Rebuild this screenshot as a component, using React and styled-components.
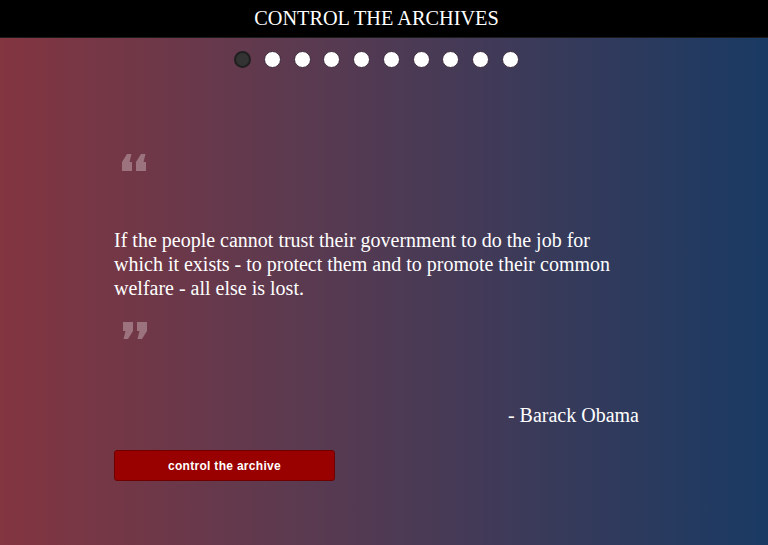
import React from "react";
import styled, { createGlobalStyle } from "styled-components";

const Global = createGlobalStyle`
  html, body { margin: 0; padding: 0; height: 100%; }
  body {
    background: linear-gradient(to right, #833540 0%, #5a3a50 40%, #1a3a63 100%);
    font-family: "Liberation Serif", "Times New Roman", serif;
    color: #fff;
  }
  #root { min-height: 545px; }
`;

const Page = styled.div`
  min-height: 545px;
  display: flex;
  flex-direction: column;
`;

const Header = styled.header`
  height: 37px;
  background: #000;
  border-bottom: 1px solid #1a1a1a;
  display: flex;
  align-items: center;
  justify-content: center;
  padding-right: 15px;
`;

const Title = styled.h1`
  margin: 0;
  font-weight: normal;
  font-size: 20.3px;
  color: #fff;
`;

const Dots = styled.nav`
  display: flex;
  justify-content: center;
  gap: 12.8px;
  margin-top: 13px;
  padding-right: 15px;
`;

const Dot = styled.span`
  box-sizing: border-box;
  width: 17px;
  height: 17px;
  border-radius: 50%;
  background: ${(p) => (p.$active ? "#333" : "#fff")};
  border: ${(p) => (p.$active ? "2px solid #1f1f1f" : "1px solid #3d2a3e")};
`;

const Content = styled.main`
  padding: 0 129px 0 114px;
  display: flex;
  flex-direction: column;
`;

const QuoteMark = styled.svg`
  display: block;
  width: 25px;
  height: 17px;
  margin-left: 8px;
  margin-top: ${(p) => p.$top}px;
  fill: rgba(255, 255, 255, 0.3);
  transform: ${(p) => (p.$close ? "rotate(180deg)" : "none")};
`;

const QuoteText = styled.p`
  margin: 57px 0 0;
  font-size: 20px;
  line-height: 24px;
  color: #fff;
`;

const Author = styled.p`
  margin: 64px 0 0;
  text-align: right;
  font-size: 20px;
  line-height: 24px;
`;

const Button = styled.button`
  margin-top: 23px;
  width: 221px;
  height: 31px;
  background: #990000;
  border: 1px solid #6e0000;
  border-radius: 3px;
  color: #fff;
  font-family: "Liberation Sans", Arial, sans-serif;
  font-weight: bold;
  font-size: 12px;
  letter-spacing: 0.3px;
  cursor: pointer;
`;

const markPath = "M5 0 H9.5 L7.5 8 H10 V17 H0 V8 Z";

function Mark({ top, close }) {
  return (
    <QuoteMark viewBox="0 0 25 17" $top={top} $close={close}>
      <path d={markPath} />
      <path d={markPath} transform="translate(14 0)" />
    </QuoteMark>
  );
}

export default function App() {
  return (
    <Page>
      <Global />
      <Header>
        <Title>CONTROL THE ARCHIVES</Title>
      </Header>
      <Dots>
        {Array.from({ length: 10 }).map((_, i) => (
          <Dot key={i} $active={i === 0} />
        ))}
      </Dots>
      <Content>
        <Mark top={86} />
        <QuoteText>
          If the people cannot trust their government to do the job for which
          it exists - to protect them and to promote their common welfare - all
          else is lost.
        </QuoteText>
        <Mark top={22} close />
        <Author>- Barack Obama</Author>
        <Button>control the archive</Button>
      </Content>
    </Page>
  );
}
